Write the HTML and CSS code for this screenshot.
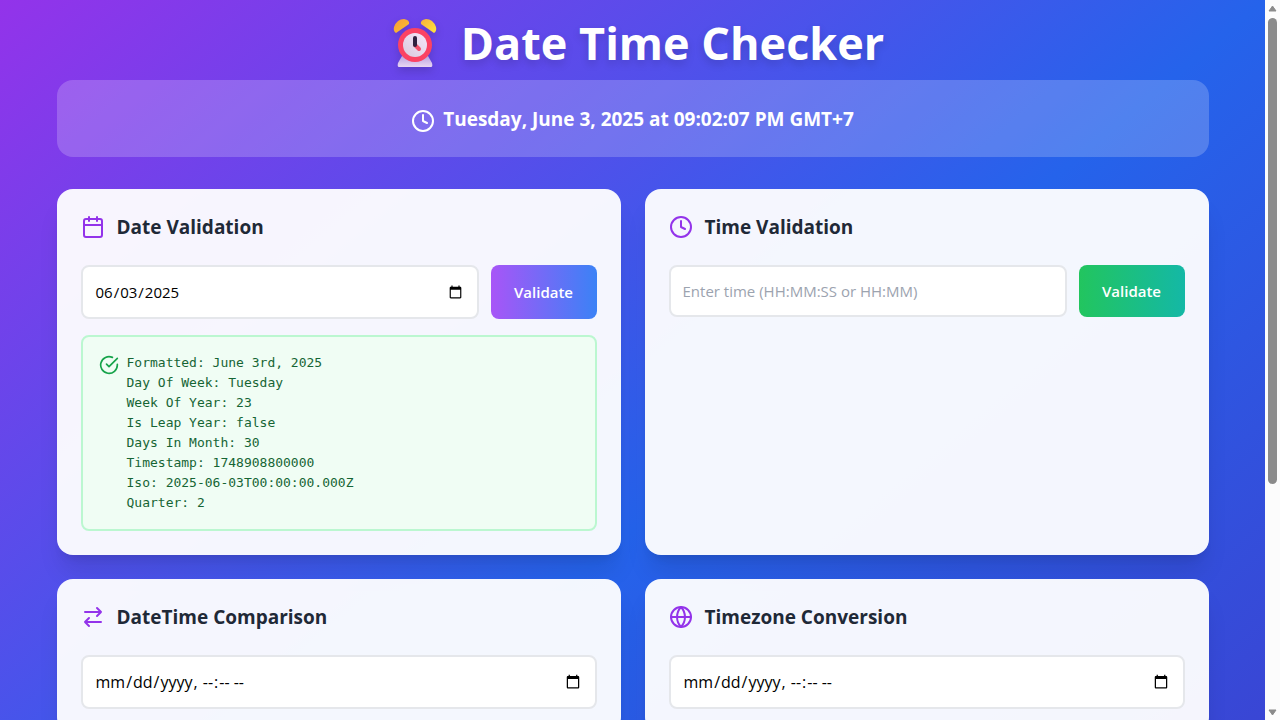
FILE: index.html
```html
<!DOCTYPE html>
<html lang="en-US">
<head>
<meta charset="utf-8">
<meta name="viewport" content="width=device-width, initial-scale=1">
<title>Date Time Checker</title>
<link rel="stylesheet" href="styles.css">
</head>
<body>
<div class="viewport">
  <div class="page">
    <div class="container">
      <h1 class="title">
        <svg class="title-clock" viewBox="0 0 44 50" aria-hidden="true">
          <defs>
            <linearGradient id="bell" x1="0" y1="0" x2="1" y2="1"><stop offset="0" stop-color="#f79a3a"/><stop offset="1" stop-color="#fbc52c"/></linearGradient>
            <linearGradient id="bell2" x1="0" y1="0" x2="1" y2="1"><stop offset="0" stop-color="#f5b03a"/><stop offset="1" stop-color="#ffe63e"/></linearGradient>
            <linearGradient id="foot" x1="0" y1="0" x2="0" y2="1"><stop offset="0" stop-color="#b9a3e0"/><stop offset="1" stop-color="#ead6f3"/></linearGradient>
            <linearGradient id="face" x1="0" y1="1" x2="1" y2="0"><stop offset="0" stop-color="#d9c9dd"/><stop offset="1" stop-color="#f6e6fa"/></linearGradient>
          </defs>
          <path d="M9 38h26l4 7q1 4-1 4H6q-2 0-1-4z" fill="url(#foot)"/>
          <path d="M3 15Q0 13 1 9Q4 1 11 1Q17 2 16 6Z" fill="url(#bell)"/>
          <path d="M41 15Q44 13 43 9Q40 1 33 1Q27 2 28 6Z" fill="url(#bell2)"/>
          <circle cx="22" cy="27" r="17" fill="#fb4263"/>
          <circle cx="22" cy="27" r="12" fill="url(#face)"/>
          <path d="M22 27l4 4" stroke="#f4506c" stroke-width="4" stroke-linecap="round"/>
          <path d="M22 20v7" stroke="#30213f" stroke-width="4" stroke-linecap="round"/>
        </svg>
        <span>Date Time Checker</span>
      </h1>
      <div class="banner">
        <svg class="icon banner-icon" viewBox="0 0 24 24" aria-hidden="true"><circle cx="12" cy="12" r="10"/><path d="M12 6v6l4 2"/></svg>
        <span>Tuesday, June 3, 2025 at 09:02:07 PM GMT+7</span>
      </div>
      <main class="cards">
        <section class="card">
          <h2 class="card-title">
            <svg class="icon" viewBox="0 0 24 24" aria-hidden="true"><path d="M8 2v4M16 2v4"/><rect x="3" y="4" width="18" height="18" rx="2"/><path d="M3 10h18"/></svg>
            <label for="date">Date Validation</label>
          </h2>
          <div class="row">
            <input class="field field-picker" id="date" type="date" value="2025-06-03">
            <button class="button button-date" type="button">Validate</button>
          </div>
          <div class="result">
            <svg class="icon result-icon" viewBox="0 0 24 24" aria-hidden="true"><path d="M22 11.080V12a10 10 0 1 1-5.930-9.140"/><path d="m9 11 3 3L22 4"/></svg>
            <div class="result-lines">
              <div>Formatted: June 3rd, 2025</div>
              <div>Day Of Week: Tuesday</div>
              <div>Week Of Year: 23</div>
              <div>Is Leap Year: false</div>
              <div>Days In Month: 30</div>
              <div>Timestamp: 1748908800000</div>
              <div>Iso: 2025-06-03T00:00:00.000Z</div>
              <div>Quarter: 2</div>
            </div>
          </div>
        </section>
        <section class="card">
          <h2 class="card-title">
            <svg class="icon" viewBox="0 0 24 24" aria-hidden="true"><circle cx="12" cy="12" r="10"/><path d="M12 6v6l4 2"/></svg>
            <label for="time">Time Validation</label>
          </h2>
          <div class="row">
            <input class="field" id="time" type="text" placeholder="Enter time (HH:MM:SS or HH:MM)">
            <button class="button button-time" type="button">Validate</button>
          </div>
        </section>
        <section class="card">
          <h2 class="card-title">
            <svg class="icon" viewBox="0 0 24 24" aria-hidden="true"><path d="m16 3 4 4-4 4M20 7H4M8 21l-4-4 4-4M4 17h16"/></svg>
            <label for="compare">DateTime Comparison</label>
          </h2>
          <div class="row"><input class="field field-picker field-datetime" id="compare" type="datetime-local"></div>
        </section>
        <section class="card">
          <h2 class="card-title">
            <svg class="icon" viewBox="0 0 24 24" aria-hidden="true"><circle cx="12" cy="12" r="10"/><path d="M2 12h20M12 2a15.300 15.300 0 0 1 4 10 15.300 15.300 0 0 1-4 10 15.300 15.300 0 0 1-4-10 15.300 15.300 0 0 1 4-10z"/></svg>
            <label for="zone">Timezone Conversion</label>
          </h2>
          <div class="row"><input class="field field-picker field-datetime" id="zone" type="datetime-local"></div>
        </section>
      </main>
    </div>
  </div>
</div>
<div class="scrollbar" aria-hidden="true">
  <svg class="arrow" viewBox="0 0 9 7"><path d="M4.500 1 8 6H1z"/></svg>
  <div class="track"><div class="thumb"></div></div>
  <svg class="arrow" viewBox="0 0 9 7"><path d="M4.500 6 8 1H1z"/></svg>
</div>
</body>
</html>
```
FILE: styles.css
```css
* { box-sizing: border-box; }

body {
  margin: 0;
  height: 100vh;
  display: flex;
  overflow: hidden;
  font-family: "Open Sans", "Noto Sans", sans-serif;
  font-size: 15px;
  line-height: 24px;
}

.viewport { flex: 1; min-width: 0; overflow: hidden; }

.page {
  min-height: 1060px;
  padding: 16px;
  background: linear-gradient(to bottom right, #9333ea, #2563eb, #4338ca);
}

.container { max-width: 1152px; margin: 0 auto; }

.title {
  display: flex;
  justify-content: center;
  align-items: center;
  gap: 24px;
  height: 48px;
  margin: 0 0 16px;
  padding: 6px 0 0 12px;
  color: #fff;
  font-size: 45px;
  line-height: 48px;
  font-weight: 700;
  text-shadow: 0 4px 8px rgba(0, 0, 0, 0.15);
}

.title-clock {
  width: 44px;
  height: 50px;
  filter: drop-shadow(0 4px 4px rgba(0, 0, 0, 0.15));
}

.icon {
  flex: none;
  width: 24px;
  height: 24px;
  fill: none;
  stroke: #9333ea;
  stroke-width: 2;
  stroke-linecap: round;
  stroke-linejoin: round;
}

.banner {
  display: flex;
  justify-content: center;
  align-items: center;
  gap: 8px;
  min-height: 77px;
  margin-bottom: 32px;
  padding: 24px;
  border-radius: 16px;
  background: rgba(255, 255, 255, 0.2);
  color: #fff;
  font-size: 19px;
  line-height: 28px;
  font-weight: 700;
}

.banner-icon { stroke: #fff; margin-top: 4px; }

.cards {
  display: grid;
  grid-template-columns: repeat(2, minmax(0, 1fr));
  gap: 24px;
}

.card {
  padding: 24px;
  border-radius: 16px;
  background: rgba(255, 255, 255, 0.95);
  box-shadow: 0 20px 25px -5px rgba(0, 0, 0, 0.1), 0 8px 10px -6px rgba(0, 0, 0, 0.1);
}

.card-title {
  display: flex;
  align-items: center;
  gap: 12px;
  margin: 0 0 24px;
  color: #1f2937;
  font-size: 19px;
  line-height: 28px;
  font-weight: 700;
}

.row { display: flex; gap: 12px; }

.field {
  flex: 1;
  min-width: 0;
  min-height: 52px;
  padding: 12px;
  border: 2px solid #e5e7eb;
  border-radius: 8px;
  background: #fff;
  color: #000;
  font: inherit;
}

.field-picker { min-height: 54px; }
.field-datetime { font-size: 16px; }
.field::placeholder { color: #9ca3af; }

.button {
  width: 106px;
  padding: 0;
  border: 0;
  border-radius: 8px;
  color: #fff;
  font: inherit;
  font-weight: 600;
}

.button-date { background: linear-gradient(to right, #a855f7, #3b82f6); }
.button-time { background: linear-gradient(to right, #22c55e, #14b8a6); }

.result {
  display: flex;
  align-items: flex-start;
  gap: 8px;
  margin-top: 16px;
  padding: 16px;
  border: 2px solid #bbf7d0;
  border-radius: 8px;
  background: #f0fdf4;
  color: #166534;
  font-family: "DejaVu Sans Mono", monospace;
  font-size: 13px;
  line-height: 20px;
}

.result-icon { width: 20px; height: 20px; margin-top: 2px; stroke: #16a34a; }

.scrollbar {
  display: flex;
  flex-direction: column;
  align-items: center;
  gap: 6px;
  width: 15px;
  padding: 5px 3px 4px;
  background: #fcfcfc;
}

.arrow { flex: none; width: 9px; height: 7px; fill: #8b8b8b; stroke: #8b8b8b; stroke-linejoin: round; }
.track { flex: 1; width: 9px; }
.thumb { height: 68%; border-radius: 5px; background: #8b8b8b; }
```
